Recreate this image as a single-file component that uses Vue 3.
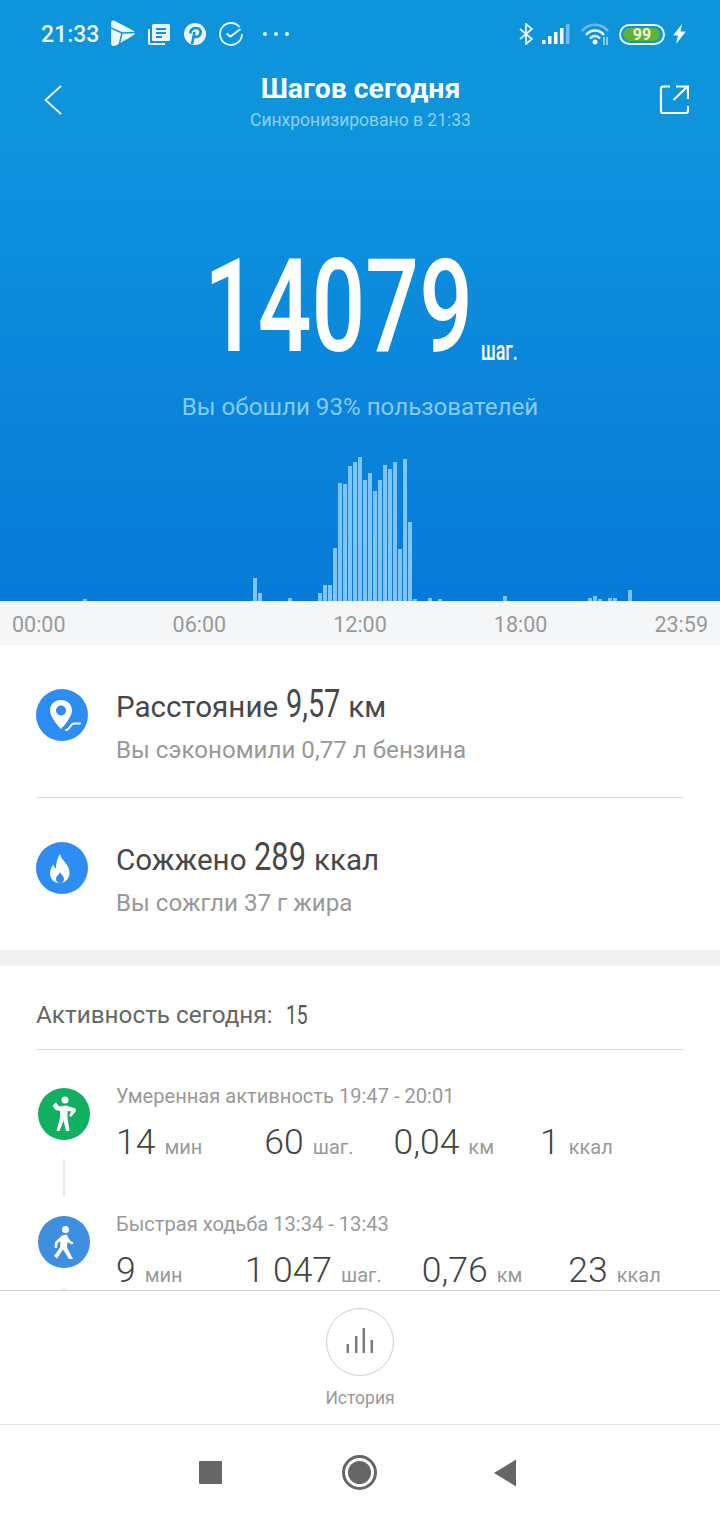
<template>
  <div class="phone">
    <!-- Top bar -->
    <header class="top">
      <div class="status">
        <span class="clock">21:33</span>
        <svg class="st st-play" viewBox="0 0 24 26">
          <path fill="#eef8ff" d="M0 3Q0 0 3 .6L23 11Q25 13 23 15L5 25.500Q0 27 0 23Z" />
          <path fill="none" stroke="#0d94da" stroke-width="1.500" d="M0 8 11 13 8 26M11 13 24 12.500" />
        </svg>
        <svg class="st st-news" viewBox="0 0 22 22" fill="none">
          <path d="M1 6V20Q1 21 2 21H17" stroke="#eef8ff" stroke-width="2" />
          <rect x="4" y="1" width="18" height="17" rx="1.500" fill="#eef8ff" />
          <path d="M8 6H18M8 10H18M8 14H14" stroke="#0d94da" stroke-width="2" />
        </svg>
        <svg class="st st-pin" viewBox="0 0 22 22">
          <circle cx="11" cy="11" r="11" fill="#eef8ff" />
          <path d="M8 21 10.500 9M6.500 10.500C6 6 10 5 12 5 15 5 17 7 16.500 10 16 13.500 12.500 15 10 13" fill="none" stroke="#0d94da" stroke-width="2.600" />
        </svg>
        <svg class="st st-check" viewBox="0 0 24 24" fill="none" stroke="#eef8ff" stroke-width="1.800">
          <path d="M20.500 5A11 11 0 1 0 23 12" />
          <path d="M7.500 11.500 11.500 14.500 21.500 7" />
        </svg>
        <span class="dots"><i></i><i></i><i></i></span>

        <span class="status-right">
          <svg class="st st-bt" viewBox="0 0 14 22" fill="none" stroke="#eef8ff" stroke-width="1.700">
            <path d="M1 6 13 16 7 21V1L13 6 1 16" />
          </svg>
          <svg class="st st-signal" viewBox="0 0 28 20">
            <rect x="0" y="16" width="3.500" height="4" fill="#eef8ff" />
            <rect x="6" y="12" width="3.500" height="8" fill="#eef8ff" />
            <rect x="12" y="8" width="3.500" height="12" fill="#eef8ff" />
            <rect x="18" y="4" width="3.500" height="16" fill="#eef8ff" />
            <rect x="24" y="0" width="3.500" height="20" fill="#6fbdf0" />
          </svg>
          <svg class="st st-wifi" viewBox="0 0 28 22" fill="none">
            <path d="M1 8C8-.5 20-.5 27 8" stroke="#6fbdf0" stroke-width="2.500" />
            <path d="M5 12C10 6 18 6 23 12M9 15.500C12 12 16 12 19 15.500" stroke="#eef8ff" stroke-width="2.500" />
            <circle cx="14" cy="19" r="2.500" fill="#eef8ff" />
            <path d="M23 14V22M26 14V22" stroke="#cfeaff" stroke-width="1.300" />
          </svg>
          <span class="battery"><span class="battery-fill"></span><span class="battery-num">99</span></span>
          <svg class="st st-bolt" viewBox="0 0 13 20" fill="#eef8ff">
            <path d="M9 0 0 11.500H5L3 20 13 7.500H7.500Z" />
          </svg>
        </span>
      </div>

      <div class="titlebar">
        <svg class="back" viewBox="0 0 18 32" fill="none" stroke="#fff" stroke-width="1.800">
          <path d="M17 2 1.500 16 17 30" />
        </svg>
        <div class="title-wrap">
          <div class="title">Шагов сегодня</div>
          <div class="subtitle">Синхронизировано в 21:33</div>
        </div>
        <svg class="share" viewBox="0 0 30 30" fill="none" stroke="#fff" stroke-width="2.200">
          <path d="M11 1.500H4Q2 1.500 2 3.500V26Q2 28 4 28H27Q29 28 29 26V21" />
          <path d="M14.500 15 28 2M17 1.500H29V14" />
        </svg>
      </div>
    </header>

    <!-- Steps hero + chart -->
    <section class="hero">
      <div class="count">
        <span class="count-num">14079</span>
        <span class="count-unit">шаг.</span>
      </div>
      <div class="beat">Вы обошли 93% пользователей</div>
      <div class="chart">
        <div v-for="(h, i) in bars" :key="i" class="slot">
          <div v-if="h" class="bar" :style="{ height: h + 'px' }"></div>
        </div>
      </div>
    </section>
    <div class="axis">
      <span v-for="t in ticks" :key="t">{{ t }}</span>
    </div>

    <!-- Distance / calories -->
    <section class="stats">
      <div class="stat">
        <div class="stat-icon">
          <svg viewBox="0 0 52 52" width="52" height="52">
            <path fill-rule="evenodd" fill="#fff" d="M25 11C18.500 11 14 15.500 14 21.500 14 26.500 20 35 25 40 30 35 36 26.500 36 21.500 36 15.500 31.500 11 25 11ZM25 16.500A5 5 0 1 1 25 26.500 5 5 0 0 1 25 16.500Z" />
            <path fill="none" stroke="#fff" stroke-width="2" stroke-linecap="round" d="M30 41C34 41 34 34.500 38 34.500H44" />
          </svg>
        </div>
        <div class="stat-text">
          <div class="stat-main">Расстояние <span class="cond val-a">9,57</span> км</div>
          <div class="stat-sub">Вы сэкономили 0,77 л бензина</div>
        </div>
      </div>
      <div class="stat stat-last">
        <div class="stat-icon">
          <svg viewBox="0 0 52 52" width="52" height="52">
            <path fill="#fff" d="M24 12C25 18 33.500 22 33.500 31 33.500 37 29 41 23.500 41 18 41 14 37 14 31 14 27 16 24 17.500 22.500 18 25 19 26 20 26.500 20 21 21 16 24 12Z" />
            <path fill="#2e8cf5" d="M24 30C25 32.500 28 34 28 37 28 39.500 26 41 24 41 22 41 20 39.500 20 37 20 34 23 33 24 30Z" />
          </svg>
        </div>
        <div class="stat-text">
          <div class="stat-main">Сожжено <span class="cond val-b">289</span> ккал</div>
          <div class="stat-sub">Вы сожгли 37 г жира</div>
        </div>
      </div>
    </section>
    <div class="band"></div>

    <!-- Activities, cut off by the bottom bar -->
    <section class="activity">
      <div class="activity-head">
        <span>Активность сегодня:</span>
        <span class="cond activity-count">15</span>
      </div>
      <div class="act">
        <div class="act-icon green">
          <svg viewBox="0 0 52 52" width="52" height="52" fill="#fff">
            <circle cx="27" cy="12" r="3.500" />
            <path d="M14.500 17.500 18 14.500 21 18.500 28 17.500 37.500 20.500 38 23 33 29 31 27.500 33.500 23.500 29.500 23V29.500L31.500 43H28L25.500 32.500 21.500 43H18.500L22 29.500V23L17.500 22Z" />
          </svg>
        </div>
        <div class="act-body">
          <div class="act-title">Умеренная активность 19:47 - 20:01</div>
          <div class="act-row row-a">
            <span class="metric"><b>14</b><small>мин</small></span>
            <span class="metric"><b>60</b><small>шаг.</small></span>
            <span class="metric"><b>0,04</b><small>км</small></span>
            <span class="metric"><b>1</b><small>ккал</small></span>
          </div>
        </div>
      </div>
      <div class="link"></div>
      <div class="act act-second">
        <div class="act-icon blue">
          <svg viewBox="0 0 52 52" width="52" height="52" fill="#fff">
            <circle cx="27.500" cy="13.500" r="3.500" />
            <path d="M24 19.500 28.500 18.500 32 24.500 35.500 26.500 34 28.500 29.500 26 29 31.500 35 43H31L25 33.500 19 42.500 16 40 22 31.500 22.500 25 19.500 27.500 19 32H16.500L17 26Z" />
          </svg>
        </div>
        <div class="act-body">
          <div class="act-title">Быстрая ходьба 13:34 - 13:43</div>
          <div class="act-row row-b">
            <span class="metric"><b>9</b><small>мин</small></span>
            <span class="metric"><b>1 047</b><small>шаг.</small></span>
            <span class="metric"><b>0,76</b><small>км</small></span>
            <span class="metric"><b>23</b><small>ккал</small></span>
          </div>
        </div>
      </div>
      <div class="link"></div>
    </section>

    <!-- History button -->
    <section class="history">
      <div class="history-btn">
        <svg viewBox="0 0 30 28" width="30" height="28" fill="#7b7b7b">
          <rect x="1.500" y="16" width="2.500" height="9" />
          <rect x="10" y="8" width="2.500" height="17" />
          <rect x="17.500" y="0" width="2.500" height="25" />
          <rect x="25.500" y="12" width="2.500" height="13" />
        </svg>
      </div>
      <div class="history-label">История</div>
    </section>

    <!-- System navigation -->
    <nav class="sysnav">
      <span class="nav-square"></span>
      <span class="nav-home"><i></i></span>
      <svg class="nav-back" viewBox="0 0 24 28" width="24" height="28" fill="#666">
        <path d="M23 .5V27.500L1 14Z" />
      </svg>
    </nav>
  </div>
</template>

<script setup>
const ticks = ['00:00', '06:00', '12:00', '18:00', '23:59']

// bar heights by 5px slot, anything not listed is empty
const heights = {
  16: 2, 50: 23, 51: 8, 57: 3, 63: 8, 64: 16, 65: 16, 66: 53, 67: 118, 68: 117,
  69: 135, 70: 139, 71: 144, 72: 121, 73: 128, 74: 110, 75: 121, 76: 136, 77: 132,
  78: 139, 79: 52, 80: 142, 81: 79, 82: 2, 85: 3, 87: 2, 100: 5, 117: 3, 118: 5,
  119: 2, 121: 3, 122: 3, 125: 11
}
const bars = Array.from({ length: 143 }, (_, i) => heights[i] || 0)
</script>

<style scoped>
.phone {
  width: 720px;
  height: 1520px;
  display: flex;
  flex-direction: column;
  overflow: hidden;
  background: #fff;
  font-family: Roboto, "Noto Sans", sans-serif;
}

.top {
  height: 145px;
  flex: none;
  background: #0d94da;
  color: #fff;
}

.status {
  height: 68px;
  display: flex;
  align-items: center;
  padding: 0 34px 0 41px;
}
.clock {
  font-size: 23px;
  font-weight: 500;
  color: #eef8ff;
  width: 70px;
}
.st { display: block; flex: none; }
.st-play { width: 24px; height: 26px; margin-top: -2px; }
.st-news { width: 22px; height: 22px; margin-left: 13px; }
.st-pin { width: 22px; height: 22px; margin-left: 14px; }
.st-check { width: 24px; height: 24px; margin-left: 13px; }
.dots { display: flex; gap: 7px; margin-left: 20px; }
.dots i { width: 4px; height: 4px; border-radius: 50%; background: #eef8ff; }

.status-right {
  margin-left: auto;
  display: flex;
  align-items: center;
}
.st-bt { width: 14px; height: 22px; }
.st-signal { width: 28px; height: 20px; margin-left: 9px; margin-top: -1px; }
.st-wifi { width: 28px; height: 22px; margin-left: 11px; }
.battery {
  position: relative;
  width: 46px;
  height: 21px;
  margin-left: 10px;
  border: 2px solid #eef8ff;
  border-radius: 11px;
  box-sizing: border-box;
  overflow: hidden;
}
.battery-fill {
  position: absolute;
  inset: 2px 3px 2px 2px;
  background: #5cb531;
  border-radius: 7px;
}
.battery-num {
  position: absolute;
  inset: 0;
  text-align: center;
  font-size: 16px;
  line-height: 17px;
  font-weight: 700;
  color: #eef8d8;
}
.st-bolt { width: 13px; height: 20px; margin-left: 8px; }

.titlebar {
  display: flex;
  align-items: flex-start;
  justify-content: space-between;
  padding: 0 31px 0 44px;
}
.back { width: 18px; height: 32px; margin-top: 16px; }
.title-wrap { text-align: center; }
.title { font-size: 28.400px; font-weight: 700; line-height: 36px; margin-top: 3px; }
.subtitle { font-size: 17.500px; line-height: 26px; color: #8ed0f7; }
.share { width: 30px; height: 30px; margin-top: 17px; }

.hero {
  height: 456px;
  flex: none;
  display: flex;
  flex-direction: column;
  background: linear-gradient(#0f93df, #067ad7);
}
.count {
  height: 130px;
  margin-top: 97px;
  position: relative;
  padding-left: 204px;
  color: #fff;
}
.count-num {
  display: block;
  width: 380px;
  font-size: 130px;
  font-weight: 500;
  line-height: 130px;
  transform: scaleX(0.728);
  transform-origin: left center;
}
.count-unit {
  position: absolute;
  left: 481px;
  bottom: 1px;
  font-size: 28px;
  font-weight: 500;
  line-height: 40px;
  transform: scaleX(0.64);
  transform-origin: left center;
}
.beat {
  text-align: center;
  font-size: 24.150px;
  line-height: 32px;
  color: #86cbf7;
  margin-top: 19px;
}
.chart {
  margin-top: auto;
  height: 144px;
  display: flex;
  align-items: flex-end;
  padding-left: 3px;
}
.slot { width: 5px; flex: none; }
.bar { width: 4px; background: #7fc4f7; }

.axis {
  height: 44px;
  flex: none;
  box-sizing: border-box;
  padding: 2px 12px 0;
  display: flex;
  justify-content: space-between;
  align-items: center;
  background: #f5f6f8;
  color: #999;
  font-size: 21.500px;
}

.stats { padding: 0 36px; flex: none; }
.stat {
  height: 153px;
  box-sizing: border-box;
  display: flex;
  align-items: flex-start;
  gap: 28px;
  border-bottom: 1px solid #dcdcdc;
}
.stat-last { height: 152px; border-bottom: none; }
.stat-icon {
  width: 52px;
  height: 52px;
  margin-top: 44px;
  border-radius: 50%;
  background: #2e8cf5;
  flex: none;
}
.stat-icon svg { display: block; }
.stat-text { padding-top: 39px; }
.stat-main {
  font-size: 29.600px;
  line-height: 40px;
  color: #484848;
  white-space: nowrap;
}
.stat-sub {
  font-size: 24.150px;
  line-height: 30px;
  color: #999;
  margin-top: 8px;
}
.cond {
  display: inline-block;
  transform: scaleX(0.74);
  transform-origin: left center;
}
.val-a { font-size: 39px; margin-right: -18px; }
.val-b { font-size: 39px; margin-right: -13px; transform: scaleX(0.79); }

.band { height: 16px; flex: none; background: #eef0f1; }

.activity {
  flex: 1;
  min-height: 0;
  overflow: hidden;
  padding: 0 36px;
}
.activity-head {
  height: 84px;
  box-sizing: border-box;
  padding-top: 14px;
  display: flex;
  align-items: center;
  border-bottom: 1px solid #dcdcdc;
  font-size: 24.300px;
  color: #666;
}
.activity-count { font-size: 26px; margin-left: 13px; margin-right: -8px; color: #555; }

.act { display: flex; margin-top: 38px; height: 52px; }
.act-second { margin-top: 0; }
.act-icon {
  width: 52px;
  height: 52px;
  margin-left: 2px;
  border-radius: 50%;
  flex: none;
}
.act-icon svg { display: block; }
.green { background: #10b060; }
.blue { background: #3f8fdf; }
.act-body { margin-left: 26px; margin-top: -5px; }
.act-title { font-size: 20.100px; line-height: 26px; color: #999; white-space: nowrap; }
.act-row { display: flex; align-items: baseline; margin-top: 15px; white-space: nowrap; line-height: 36px; }
.metric b { font-weight: 300; font-size: 35.500px; line-height: 36px; color: #444; }
.metric small { font-size: 20px; line-height: 24px; color: #999; margin-left: 9px; }
.metric + .metric { margin-left: 62px; }
.metric + .metric + .metric { margin-left: 40px; }
.metric + .metric + .metric + .metric { margin-left: 46px; }

.link { width: 2px; height: 38px; margin: 19px 0 19px 27px; background: #e8e8e8; }

.history {
  height: 135px;
  flex: none;
  box-sizing: border-box;
  border-top: 1px solid #cfcfcf;
  border-bottom: 1px solid #e4e4e4;
  display: flex;
  flex-direction: column;
  align-items: center;
}
.history-btn {
  width: 68px;
  height: 68px;
  box-sizing: border-box;
  margin-top: 17px;
  border: 1px solid #cfcfcf;
  border-radius: 50%;
  display: flex;
  align-items: center;
  justify-content: center;
}
.history-label { font-size: 17.500px; line-height: 24px; color: #999; margin-top: 10px; }

.sysnav {
  height: 95px;
  flex: none;
  box-sizing: border-box;
  padding-right: 4px;
  display: flex;
  align-items: center;
  justify-content: center;
  gap: 120px;
}
.nav-square { width: 23px; height: 23px; background: #666; border-radius: 1px; }
.nav-home {
  width: 35px;
  height: 35px;
  box-sizing: border-box;
  border: 3px solid #666;
  border-radius: 50%;
  padding: 3px;
}
.nav-home i { display: block; width: 100%; height: 100%; border-radius: 50%; background: #666; }
.nav-back { display: block; margin-left: -4px; }
</style>

<style>
html, body { margin: 0; background: #fff; }
</style>
